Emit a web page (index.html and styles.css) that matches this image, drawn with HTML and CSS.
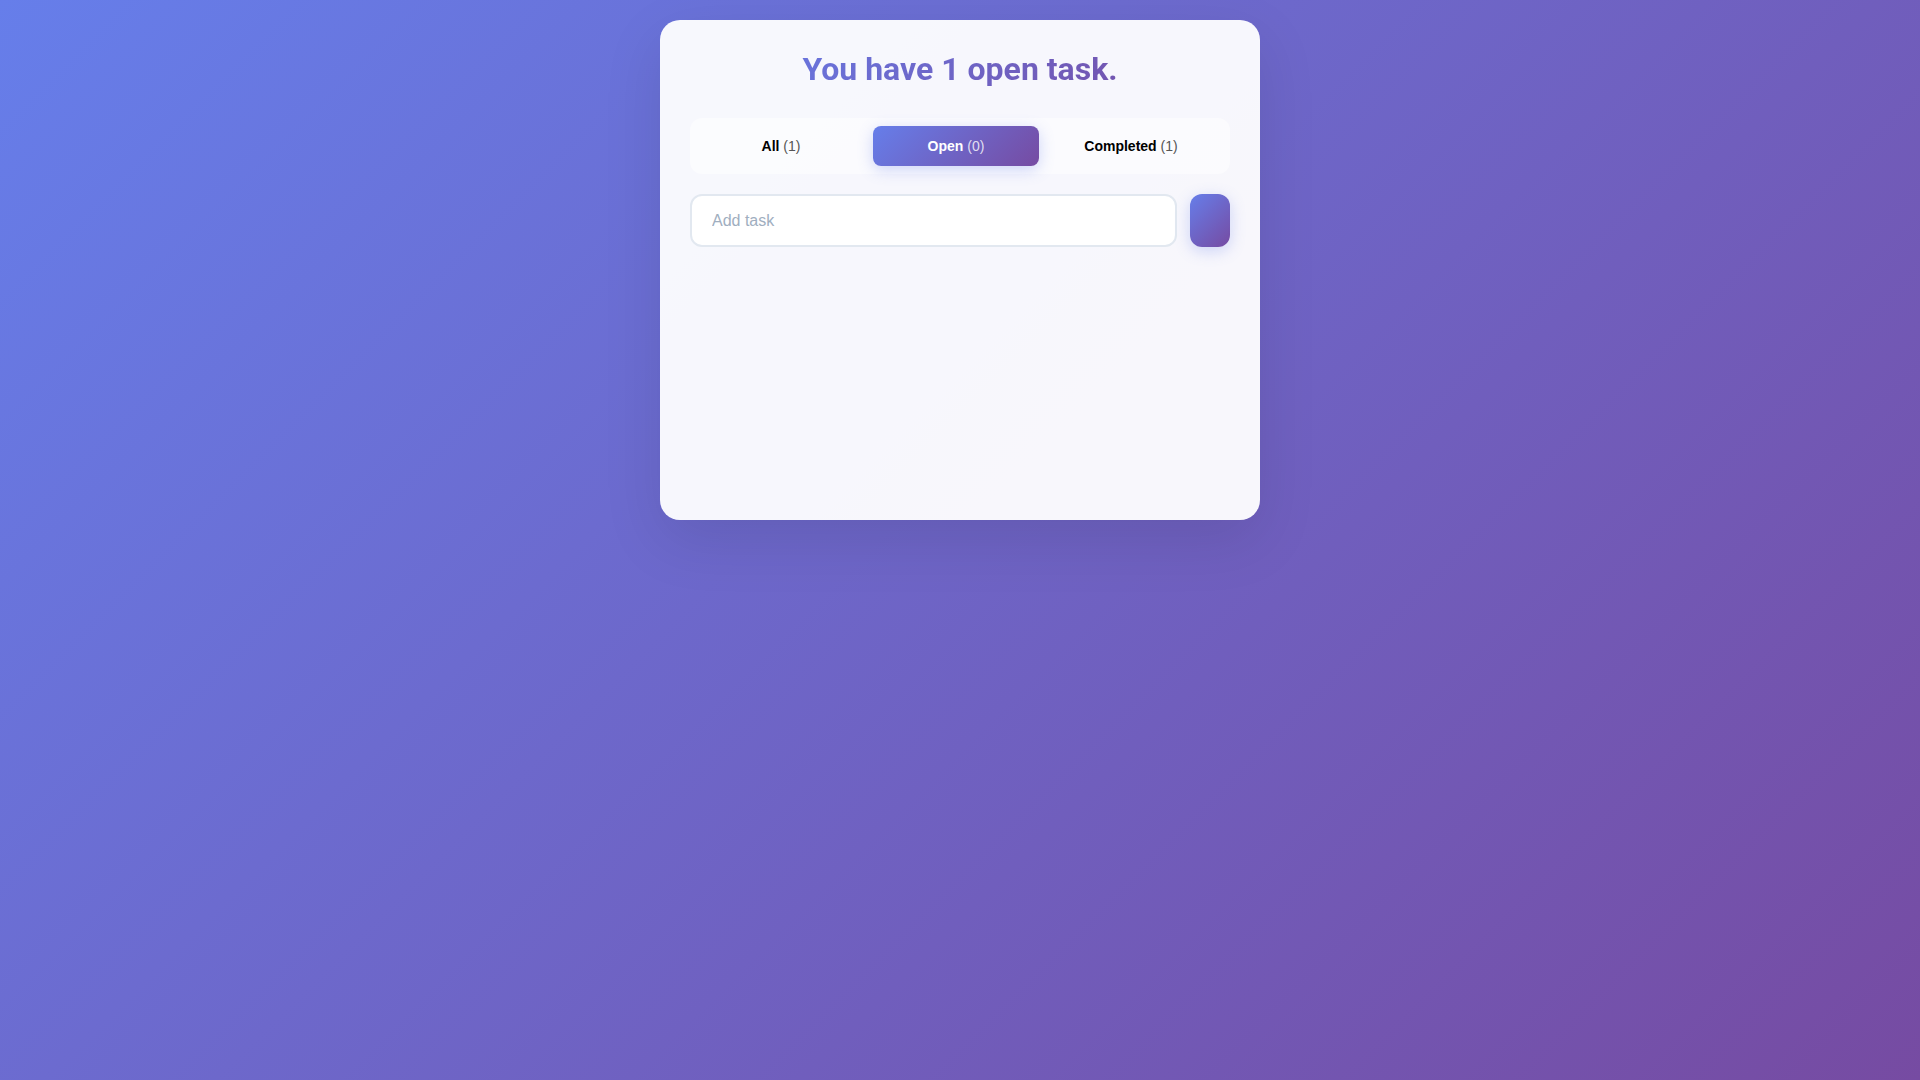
FILE: index.html
```html
<!DOCTYPE html>
<html lang="en">
  <head>
    <meta charset="UTF-8" />
    <meta name="viewport" content="width=device-width, initial-scale=1.0" />
    <title>Todo</title>

    <link rel="stylesheet" href="styles.css">
  </head>
  <body>
    <!-- todo card -->
    <main class="todo">
      <h1 class="todo-title">You have 1 open task.</h1>

      <!-- filter tabs -->
      <nav class="tabs">
        <button class="tab"><b>All</b> <span class="count">(1)</span></button>
        <button class="tab active"><b>Open</b> <span class="count">(0)</span></button>
        <button class="tab"><b>Completed</b> <span class="count">(1)</span></button>
      </nav>

      <!-- add task -->
      <form class="add-form">
        <input class="add-input" type="text" placeholder="Add task" />
        <button class="add-btn" type="button"></button>
      </form>

      <ul class="task-list"></ul>
    </main>
  </body>
</html>
```

FILE: styles.css
```css
* {
  margin: 0;
  padding: 0;
  box-sizing: border-box;
}
html,
body {
  min-height: 100%;
}
body {
  font-family: "Liberation Sans", Arial, sans-serif;
  font-size: 16px;
  background: linear-gradient(135deg, #667eea 0%, #764ba2 100%);
  min-height: 100vh;
  padding-top: 20px;
}
ul,
li {
  list-style: none;
}
.todo {
  width: 600px;
  min-height: 500px;
  margin: 0 auto;
  padding: 30px;
  background-color: rgba(255, 255, 255, 0.95);
  border-radius: 20px;
  box-shadow: 0 20px 60px rgba(0, 0, 0, 0.1);
}
.todo-title {
  font-family: Roboto, "Liberation Sans", sans-serif;
  font-size: 32px;
  font-weight: 700;
  text-align: center;
  margin-bottom: 30px;
  background: linear-gradient(135deg, #667eea 0%, #764ba2 100%);
  -webkit-background-clip: text;
  background-clip: text;
  color: transparent;
}
.tabs {
  display: grid;
  grid-template-columns: repeat(3, 166px);
  gap: 9px;
  padding: 8px;
  margin-bottom: 20px;
  background-color: rgba(255, 255, 255, 0.5);
  border-radius: 12px;
}
.tab {
  height: 40px;
  border: 0;
  border-radius: 8px;
  background: transparent;
  font-family: "Liberation Sans", Arial, sans-serif;
  font-size: 14px;
  color: #000;
  cursor: pointer;
}
.tab .count {
  color: #555;
}
.tab.active {
  color: #fff;
  background: linear-gradient(135deg, #667eea 0%, #764ba2 100%);
  box-shadow: 0 4px 15px rgba(102, 126, 234, 0.3);
}
.tab.active .count {
  color: rgba(255, 255, 255, 0.8);
}
.add-form {
  display: flex;
  gap: 13px;
}
.add-input {
  flex: 1;
  height: 53px;
  padding: 0 20px;
  border: 2px solid #e2e8f0;
  border-radius: 12px;
  background-color: #fff;
  font-family: "Liberation Sans", Arial, sans-serif;
  font-size: 16px;
  outline: none;
}
.add-input::placeholder {
  color: #a0aec0;
}
.add-btn {
  width: 40px;
  height: 53px;
  border: 0;
  border-radius: 12px;
  background: linear-gradient(135deg, #667eea 0%, #764ba2 100%);
  box-shadow: 0 4px 15px rgba(102, 126, 234, 0.3);
  cursor: pointer;
}
```
